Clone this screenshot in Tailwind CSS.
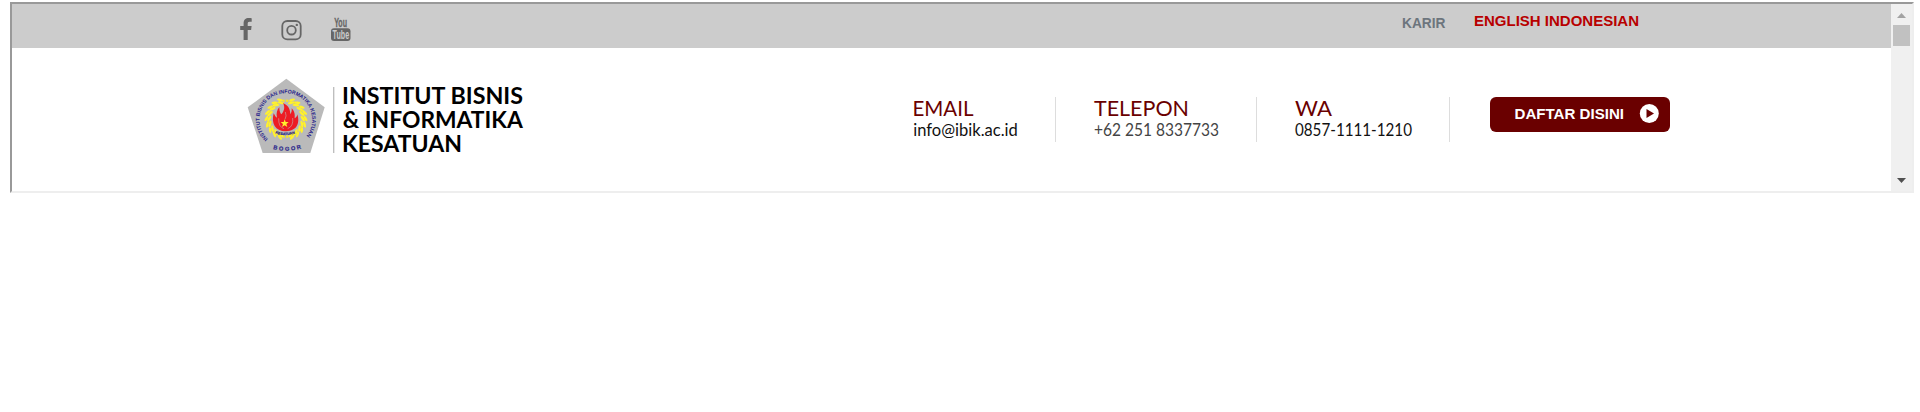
<!DOCTYPE html>
<html lang="id">
<head>
<meta charset="utf-8">
<title>Institut Bisnis &amp; Informatika Kesatuan</title>
<script src="https://cdn.jsdelivr.net/npm/@tailwindcss/browser@4"></script>
</head>
<body class="bg-white overflow-hidden font-['Liberation_Sans',Arial,sans-serif]">
<div class="mt-[2px] ml-[10px] flex h-[191px] w-[1904px] border-2 border-t-[#999] border-l-[#999] border-r-[#eee] border-b-[#eee]">
  <div class="w-[1879px] shrink-0">
    <div class="flex h-11 bg-[#ccc]">
      <div class="flex pl-[228px] pt-[14px] text-[#666]">
        <svg class="h-[22px] w-3" viewBox="0 0 12 22" fill="currentColor"><path d="M11.7.2v3.5H9.6C8 3.7 7.7 4.5 7.7 5.6V8h3.900l-.5 3.900H7.700V22H3.600V11.900H.2V8h3.400V5.100C3.600 1.800 5.700 0 8.700 0c1.400 0 2.600.1 3 .2z"/></svg>
        <svg class="ml-[29px] mt-[2px] h-[21px] w-[21px]" viewBox="0 0 21 21" fill="none" stroke="currentColor" stroke-width="1.800"><rect x="1.300" y="1" width="18.400" height="18.400" rx="5"/><circle cx="10.500" cy="10.200" r="4.300"/><circle cx="15.800" cy="4.900" r="1.200" fill="currentColor" stroke="none"/></svg>
        <svg class="ml-[29px] h-6 w-5 overflow-visible" viewBox="0 0 20 24" fill="currentColor"><rect x="0" y="10.300" width="19.500" height="12.700" rx="3"/><g font-family="Liberation Sans" font-weight="bold"><text x="3.200" y="9" font-size="12.500" stroke="currentColor" stroke-width=".3" textLength="12.800" lengthAdjust="spacingAndGlyphs">You</text><text x="1.600" y="21" font-size="12" fill="#ccc" textLength="16.500" lengthAdjust="spacingAndGlyphs">Tube</text></g></svg>
      </div>
      <div class="ml-auto flex pr-[251px] font-bold">
        <svg class="mr-[28px] h-10 w-11 overflow-visible" viewBox="0 0 44 40"><text x="0" y="24" font-size="14" fill="#6c757d" textLength="43.500" lengthAdjust="spacingAndGlyphs">KARIR</text></svg>
        <svg class="h-10 w-[166px] overflow-visible" viewBox="0 0 166 40"><text x="0" y="22" font-size="15" fill="#b80000" textLength="165" lengthAdjust="spacingAndGlyphs">ENGLISH INDONESIAN</text></svg>
      </div>
    </div>
    <div class="flex h-[143px] pl-[223px] pt-[22px]">
      <svg class="h-[95px] w-[100px] shrink-0 overflow-visible" viewBox="0 0 300 285">
        <defs>
          <path id="ring" d="M99 207A79 79 0 1 1 211 202" fill="none"/>
          <path id="base" d="M114 237Q156 249 202 234" fill="none"/>
          <path id="name" d="M121 190Q152 201 184 189" fill="none"/>
          <g id="leaf" fill="#fff12e"><ellipse cx="0" cy="-59" rx="3.500" ry="9" transform="rotate(60 0 -59)"/><ellipse cx="0" cy="-50" rx="3.500" ry="10" transform="rotate(60 0 -50)"/></g>
        </defs>
        <path d="M154 26L269 112L226 249H83L38 112Z" fill="#bababa"/>
        <g transform="translate(153 146)">
          <circle r="54" fill="none" stroke="#f5e62a" stroke-width="7" stroke-dasharray="7 4"/>
          <use href="#leaf" transform="rotate(18)"/><use href="#leaf" transform="rotate(36)"/><use href="#leaf" transform="rotate(54)"/><use href="#leaf" transform="rotate(72)"/><use href="#leaf" transform="rotate(90)"/><use href="#leaf" transform="rotate(108)"/><use href="#leaf" transform="rotate(126)"/><use href="#leaf" transform="rotate(144)"/><use href="#leaf" transform="rotate(162)"/>
          <g transform="scale(-1 1)"><use href="#leaf" transform="rotate(18)"/><use href="#leaf" transform="rotate(36)"/><use href="#leaf" transform="rotate(54)"/><use href="#leaf" transform="rotate(72)"/><use href="#leaf" transform="rotate(90)"/><use href="#leaf" transform="rotate(108)"/><use href="#leaf" transform="rotate(126)"/><use href="#leaf" transform="rotate(144)"/><use href="#leaf" transform="rotate(162)"/></g>
        </g>
        <path d="M144 99C164 108 165 121 166 133C169 128 171 124 170 115C179 124 180 133 179 145C184 142 187 138 187 133C195 158 187 183 153 184C120 184 108 160 116 130C120 137 122 142 126 143C123 130 126 119 133 111C133 124 136 129 139 133C147 124 151 112 144 99Z" fill="#ed1c24"/>
        <path d="M131 145Q130 171 147 176M173 144Q176 169 158 176M151 126Q156 138 150 148" fill="none" stroke="#c4a3a3" stroke-width="2"/>
        <path d="M149 148l3 8h9l-7 6 3 9-8-5-8 5 3-9-7-6h9z" fill="#fff12e"/>
        <g font-family="Liberation Sans" font-weight="bold" fill="#29258b">
          <text font-size="16"><textPath href="#ring" textLength="366" lengthAdjust="spacingAndGlyphs">INSTITUT BISNIS DAN INFORMATIKA KESATUAN</textPath></text>
          <text font-size="17" stroke="#29258b" stroke-width=".6"><textPath href="#base" textLength="86">BOGOR</textPath></text>
          <text font-size="10" stroke="#29258b" stroke-width=".6"><textPath href="#name" textLength="60" lengthAdjust="spacingAndGlyphs">KESATUAN</textPath></text>
        </g>
      </svg>
      <svg class="ml-[-2px] h-[95px] w-[192px] shrink-0 overflow-visible" viewBox="333 70 192 95">
        <path d="M333.700 87V153" stroke="#bbb" stroke-width="1.300"/>
        <g font-family="Lato" font-weight="bold" font-size="22" fill="#000">
          <text x="342" y="103.500" textLength="181" lengthAdjust="spacingAndGlyphs">INSTITUT BISNIS</text>
          <text x="342.800" y="127.500" textLength="180" lengthAdjust="spacingAndGlyphs">&amp; INFORMATIKA</text>
          <text x="342" y="151.500" textLength="120" lengthAdjust="spacingAndGlyphs">KESATUAN</text>
        </g>
      </svg>
      <div class="flex pl-[387px] pt-[27px] font-['Lato',sans-serif]">
        <svg class="h-[45px] w-[144px] overflow-visible border-r border-[#ddd]" viewBox="0 0 143 45"><text x=".5" y="18.800" font-size="21.500" fill="#6a0000" textLength="61" lengthAdjust="spacingAndGlyphs">EMAIL</text><text x="1.300" y="39.300" font-size="16.500" fill="#111" textLength="104.500" lengthAdjust="spacingAndGlyphs">info@ibik.ac.id</text></svg>
        <svg class="ml-[38px] h-[45px] w-[163px] overflow-visible border-r border-[#ddd]" viewBox="0 0 162 45"><text x="0" y="18.800" font-size="21.500" fill="#6a0000" textLength="95" lengthAdjust="spacingAndGlyphs">TELEPON</text><text x="0" y="39.300" font-size="16.500" fill="#444" textLength="125" lengthAdjust="spacingAndGlyphs">+62 251 8337733</text></svg>
        <svg class="ml-[38px] h-[45px] w-[155px] overflow-visible border-r border-[#ddd]" viewBox="0 0 154 45"><text x="0" y="18.800" font-size="21.500" fill="#6a0000" textLength="37" lengthAdjust="spacingAndGlyphs">WA</text><text x="0" y="39.300" font-size="16.500" fill="#111" textLength="117" lengthAdjust="spacingAndGlyphs">0857-1111-1210</text></svg>
        <button class="ml-10 h-[35px] w-[180px] rounded-md bg-[#6a0000]">
          <svg class="h-[35px] w-[180px]" viewBox="0 0 180 35"><text x="24.500" y="22" font-family="Liberation Sans" font-weight="bold" font-size="15.500" fill="#fff" textLength="109.500" lengthAdjust="spacingAndGlyphs">DAFTAR DISINI</text><circle cx="159.300" cy="16.500" r="9.500" fill="#fff"/><path d="M156.500 12L164 16.500L156.500 21Z" fill="#6a0000"/></svg>
        </button>
      </div>
    </div>
  </div>
  <div class="flex w-[21px] flex-col items-center bg-[#f0f0f0]">
    <svg class="mt-[9px] h-[5px] w-[9px]" viewBox="0 0 9 5"><path d="M4.500 0L9 5H0Z" fill="#a3a3a3"/></svg>
    <div class="mt-[7px] h-[21px] w-[17px] bg-[#c1c1c1]"></div>
    <svg class="mt-auto mb-[8px] h-[5px] w-[9px]" viewBox="0 0 9 5"><path d="M0 0H9L4.500 5Z" fill="#505050"/></svg>
  </div>
</div>
</body>
</html>
